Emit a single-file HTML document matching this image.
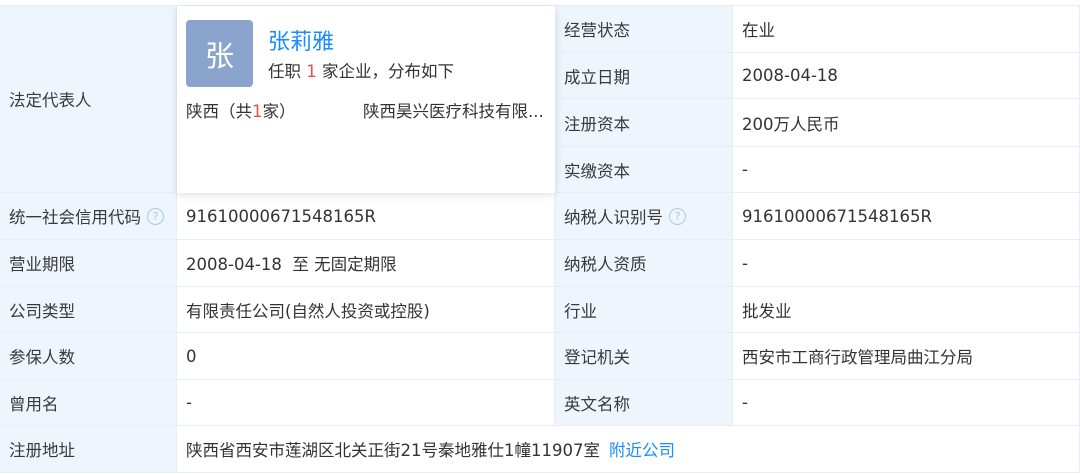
<!DOCTYPE html>
<html><head><meta charset="utf-8"><style>
*{margin:0;padding:0;box-sizing:border-box}
body{width:1080px;height:474px;background:#fff;position:relative;overflow:hidden;font-family:"DejaVu Sans","Noto Sans CJK SC",sans-serif;font-size:16.5px;color:#333}
.c{position:absolute;display:flex;align-items:center;padding-left:9px;border-bottom:1px solid #e6edf5;border-right:1px solid #e6edf5;white-space:nowrap}
.l{background:#eef5fc;color:#3a3a3a}
.q{display:inline-block;width:17px;height:17px;border:1px solid #a9c8ea;border-radius:50%;color:#a9c8ea;font-size:11px;line-height:15px;text-align:center;margin-left:6px}
.card{position:absolute;left:177px;top:6px;width:378px;height:187px;background:#fff;box-shadow:0 2px 8px rgba(0,0,0,.12)}
</style></head><body>
<div style="position:absolute;left:0;top:5px;width:1080px;border-top:1px solid #e6edf5"></div>
<div class="c l" style="left:0;top:6px;width:177px;height:187px">法定代表人</div>
<div class="c" style="left:177px;top:6px;width:378px;height:187px"></div>
<div class="c l" style="left:0;top:193px;width:177px;height:47px">统一社会信用代码<span class="q">?</span></div>
<div class="c" style="left:177px;top:193px;width:378px;height:47px">91610000671548165R</div>
<div class="c l" style="left:0;top:240px;width:177px;height:47px">营业期限</div>
<div class="c" style="left:177px;top:240px;width:378px;height:47px">2008-04-18&nbsp; 至 无固定期限</div>
<div class="c l" style="left:0;top:287px;width:177px;height:46px">公司类型</div>
<div class="c" style="left:177px;top:287px;width:378px;height:46px">有限责任公司(自然人投资或控股)</div>
<div class="c l" style="left:0;top:333px;width:177px;height:47px">参保人数</div>
<div class="c" style="left:177px;top:333px;width:378px;height:47px">0</div>
<div class="c l" style="left:0;top:380px;width:177px;height:46px">曾用名</div>
<div class="c" style="left:177px;top:380px;width:378px;height:46px">-</div>
<div class="c l" style="left:0;top:426px;width:177px;height:47px">注册地址</div>
<div class="c" style="left:177px;top:426px;width:903px;height:47px">陕西省西安市莲湖区北关正街21号秦地雅仕1幢11907室<span style="color:#1a8cff;margin-left:9px">附近公司</span></div>
<div class="c l" style="left:555px;top:6px;width:178px;height:47px">经营状态</div>
<div class="c" style="left:733px;top:6px;width:347px;height:47px">在业</div>
<div class="c l" style="left:555px;top:53px;width:178px;height:46px">成立日期</div>
<div class="c" style="left:733px;top:53px;width:347px;height:46px">2008-04-18</div>
<div class="c l" style="left:555px;top:99px;width:178px;height:48px">注册资本</div>
<div class="c" style="left:733px;top:99px;width:347px;height:48px">200万人民币</div>
<div class="c l" style="left:555px;top:147px;width:178px;height:46px">实缴资本</div>
<div class="c" style="left:733px;top:147px;width:347px;height:46px">-</div>
<div class="c l" style="left:555px;top:193px;width:178px;height:47px">纳税人识别号<span class="q">?</span></div>
<div class="c" style="left:733px;top:193px;width:347px;height:47px">91610000671548165R</div>
<div class="c l" style="left:555px;top:240px;width:178px;height:47px">纳税人资质</div>
<div class="c" style="left:733px;top:240px;width:347px;height:47px">-</div>
<div class="c l" style="left:555px;top:287px;width:178px;height:46px">行业</div>
<div class="c" style="left:733px;top:287px;width:347px;height:46px">批发业</div>
<div class="c l" style="left:555px;top:333px;width:178px;height:47px">登记机关</div>
<div class="c" style="left:733px;top:333px;width:347px;height:47px">西安市工商行政管理局曲江分局</div>
<div class="c l" style="left:555px;top:380px;width:178px;height:46px">英文名称</div>
<div class="c" style="left:733px;top:380px;width:347px;height:46px">-</div>
<div class="card">
<div style="position:absolute;left:9px;top:14px;width:67px;height:67px;background:#8ba4cd;border-radius:4px;color:#fff;font-size:29px;display:flex;align-items:center;justify-content:center">张</div>
<div style="position:absolute;left:91px;top:18px;font-size:22px;color:#1a8cff">张莉雅</div>
<div style="position:absolute;left:91px;top:52px;font-size:16.5px">任职 <span style="color:#f04b4b">1</span> 家企业，分布如下</div>
<div style="position:absolute;left:9px;top:92px;font-size:16.5px">陕西（共<span style="color:#f04b4b">1</span>家）</div>
<div style="position:absolute;left:186px;top:92px;font-size:16.5px">陕西昊兴医疗科技有限...</div>
</div>
</body></html>
